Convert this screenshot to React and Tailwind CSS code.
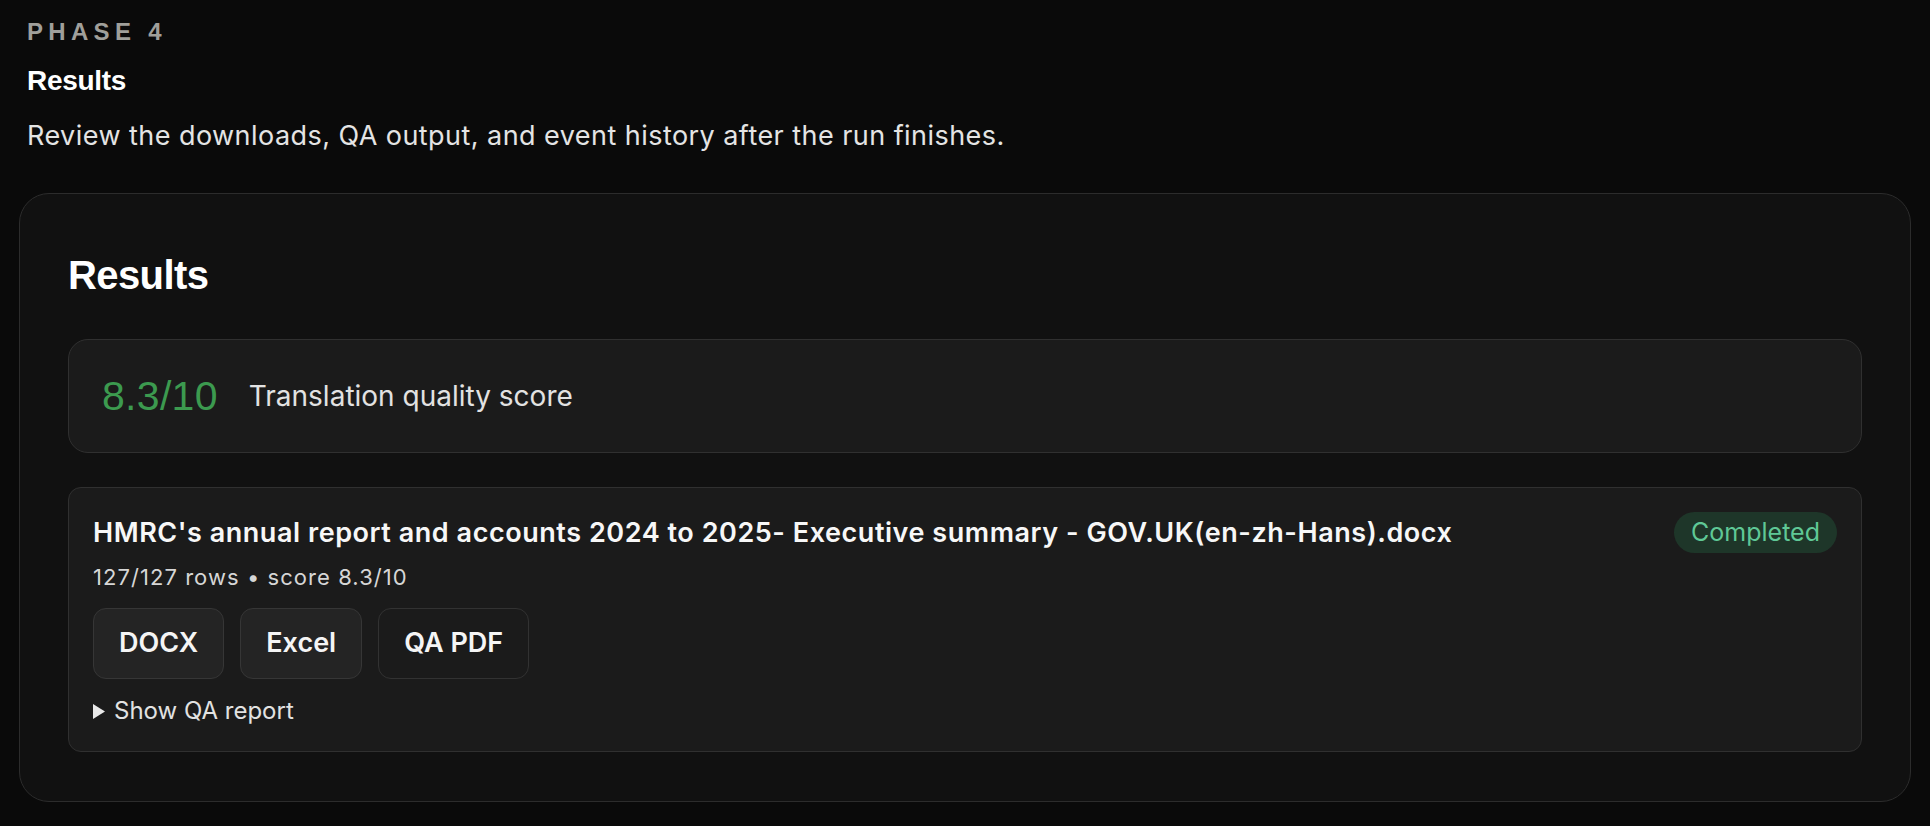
import React from "react";

const sans = { fontFamily: "Inter, 'Noto Sans', sans-serif" };
const helv = { fontFamily: "'Liberation Sans', Arial, sans-serif" };

const DownloadButton = ({ label, muted }) => (
  <button
    className={
      "h-[71px] rounded-[13px] border px-[25px] text-[27px] font-semibold text-[#f5f5f5] " +
      (muted ? "border-[#323232] bg-[#1b1b1b] px-[23px]" : "border-[#363636] bg-[#242424]")
    }
  >
    {label}
  </button>
);

export default function App() {
  return (
    <div className="min-h-screen bg-[#0a0a0a] px-[19px] pt-[18px] pb-[23px]" style={sans}>
      <div className="px-2">
        <div
          className="text-[24px] leading-[28px] font-semibold uppercase tracking-[5.3px] text-[#a09f9a]"
          style={helv}
        >
          Phase 4
        </div>
        <h1
          className="mt-[18px] text-[28px] leading-[34px] font-bold tracking-[-0.3px] text-white"
          style={helv}
        >
          Results
        </h1>
        <p className="mt-[20px] text-[27px] leading-[36px] tracking-[0.45px] text-[#e4e4e4]">
          Review the downloads, QA output, and event history after the run finishes.
        </p>
      </div>

      <div className="mt-[39px] rounded-[30px] border border-[#2c2c2c] bg-[#111111] px-[48px] pt-[57px] pb-[49px]">
        <h2
          className="text-[40px] leading-[48px] font-bold tracking-[-0.6px] text-white"
          style={helv}
        >
          Results
        </h2>

        <div className="mt-[40px] flex h-[114px] items-center gap-[31px] rounded-[20px] border border-[#303030] bg-[#1b1b1b] px-[33px]">
          <span className="text-[41px] leading-[40px] tracking-[0.3px] text-[#3c9a4f]" style={helv}>
            8.3/10
          </span>
          <span className="text-[28px] leading-[28px] text-[#e2e2e2]">Translation quality score</span>
        </div>

        <div className="mt-[34px] rounded-[13px] border border-[#303030] bg-[#1b1b1b] p-[24px]">
          <div className="flex h-[41px] items-center justify-between">
            <div className="text-[27px] leading-[36px] font-semibold tracking-[0.55px] text-[#f7f7f7]">
              HMRC's annual report and accounts 2024 to 2025- Executive summary - GOV.UK(en-zh-Hans).docx
            </div>
            <span className="flex h-[41px] items-center rounded-full bg-[#1e3629] px-[17px] text-[25px] text-[#5fc896]">
              Completed
            </span>
          </div>
          <div className="mt-[9px] text-[22px] leading-[30px] tracking-[1.05px] text-[#d6d6d6]">
            127/127 rows • score 8.3/10
          </div>
          <div className="mt-[16px] flex gap-[16px]">
            <DownloadButton label="DOCX" />
            <DownloadButton label="Excel" />
            <DownloadButton label="QA PDF" muted />
          </div>
          <div className="mt-[16px] flex items-center gap-[9px] text-[24px] leading-[32px] text-[#e2e2e2]">
            <svg width="12" height="15" viewBox="0 0 12 15" className="mt-[1px]">
              <polygon points="0,0 12,7.5 0,15" fill="#e8e8e8" />
            </svg>
            <span>Show QA report</span>
          </div>
        </div>
      </div>
    </div>
  );
}
